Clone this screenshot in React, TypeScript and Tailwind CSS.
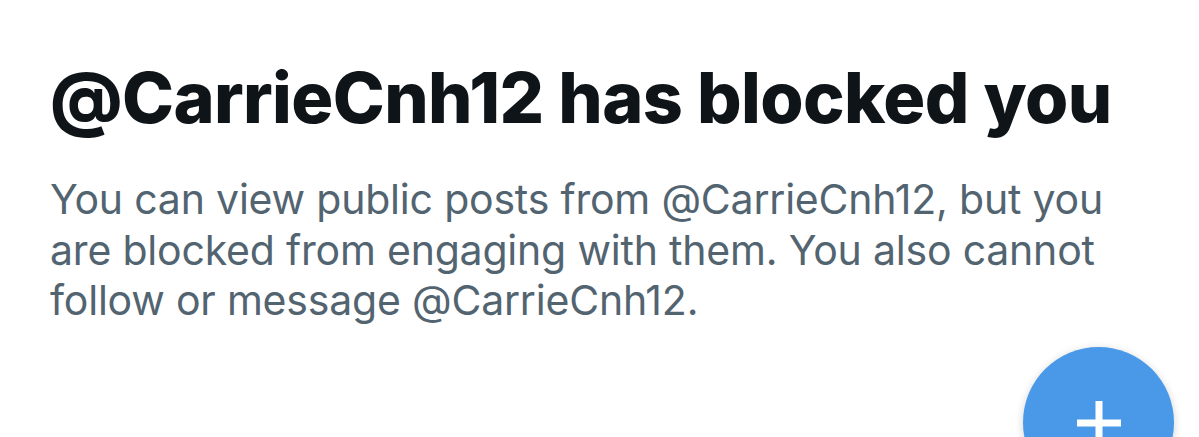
import React from "react";

const BlockedNotice: React.FC = () => {
  const handle = "@CarrieCnh12";

  return (
    <div className="relative h-[437px] w-full overflow-hidden bg-white font-['Inter','Liberation_Sans',Arial,sans-serif]">
      <div className="flex flex-col pl-[50px] pt-[55px] pr-[60px]">
        <h1 className="text-[70px] font-extrabold leading-[86px] tracking-[-0.6px] text-[#0f1419] whitespace-nowrap">
          {handle} has blocked you
        </h1>
        <p className="mt-[33px] w-[1070px] text-[41px] leading-[50.5px] tracking-[-0.2px] text-[#536471]">
          You can view public posts from {handle}, but you are blocked from
          engaging with them. You also cannot follow or message {handle}.
        </p>
      </div>

      {/* floating compose button */}
      <button className="absolute left-[1023px] top-[347px] flex h-[151px] w-[151px] items-start justify-center rounded-full bg-[#4a99e9] shadow-[0_2px_8px_rgba(0,0,0,0.18)]">
        <svg
          width="44"
          height="44"
          viewBox="0 0 44 44"
          className="mt-[54px]"
          fill="#ffffff"
        >
          <rect x="0" y="18.5" width="44" height="7" />
          <rect x="18.5" y="0" width="7" height="44" />
        </svg>
      </button>
    </div>
  );
};

export default function App() {
  return <BlockedNotice />;
}
